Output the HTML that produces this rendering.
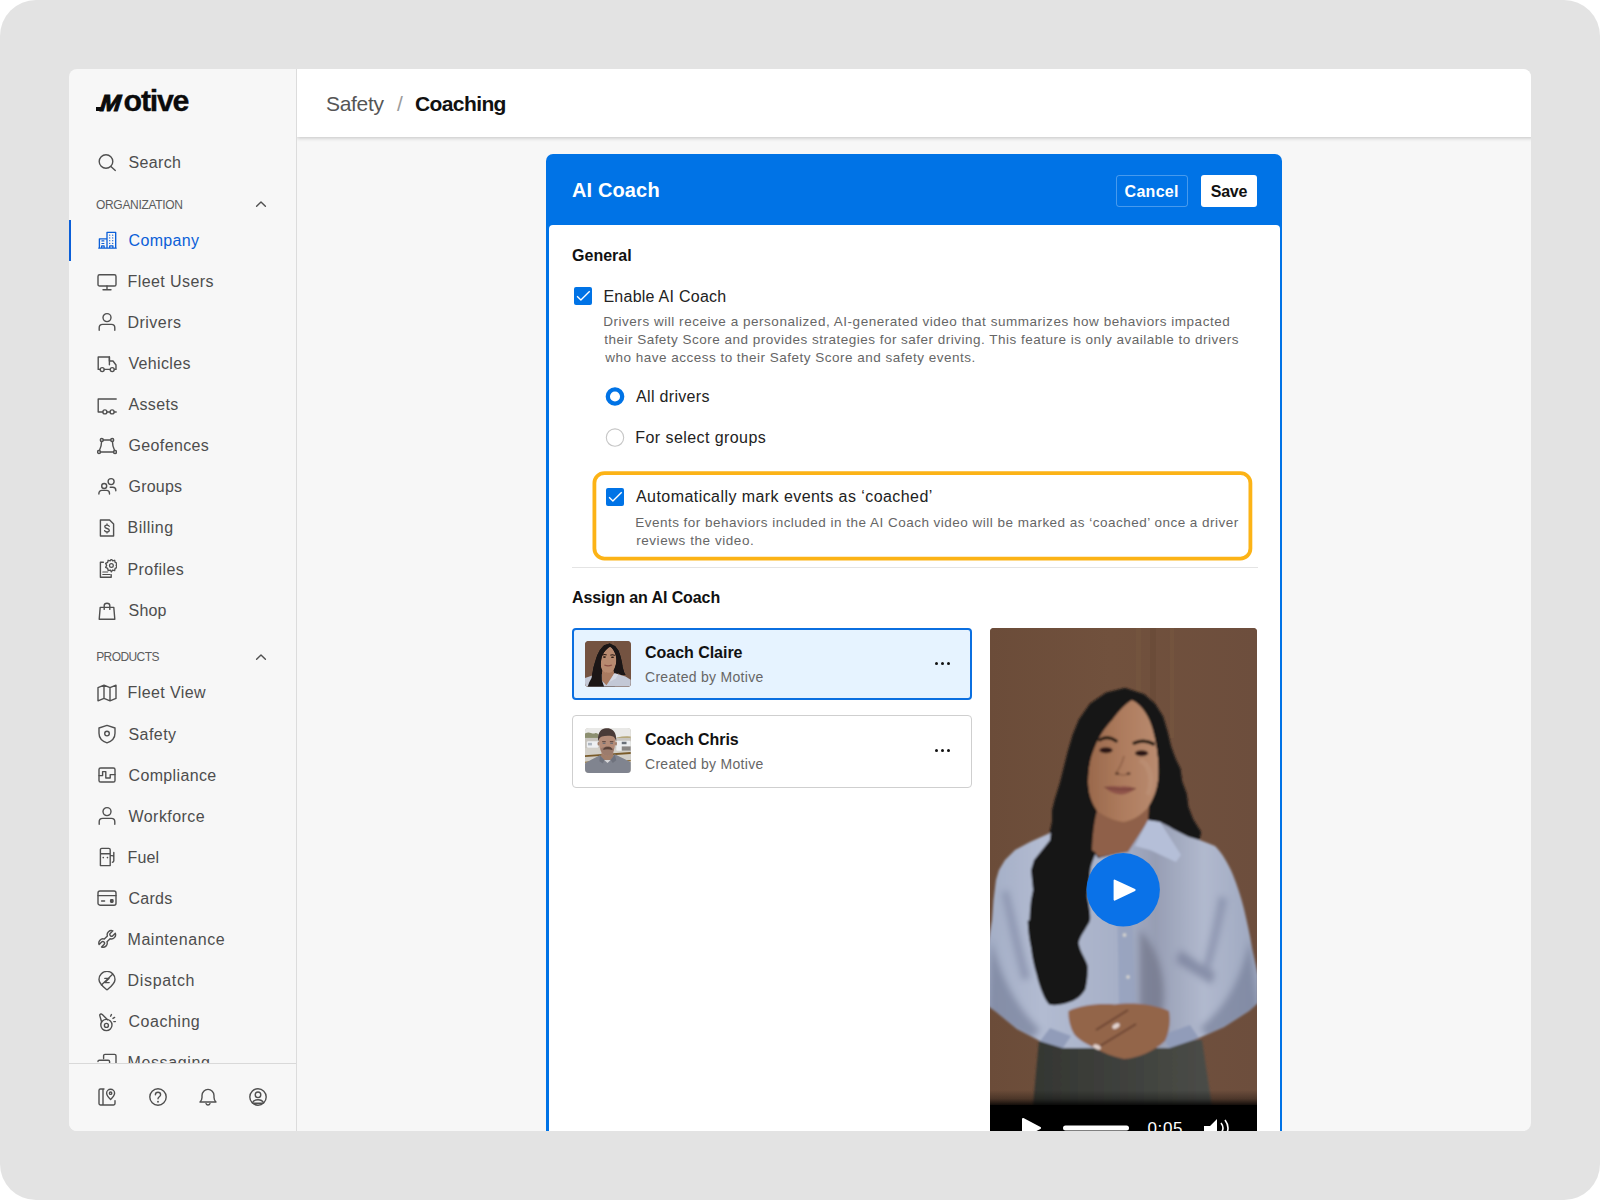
<!DOCTYPE html>
<html lang="en">
<head>
<meta charset="utf-8">
<title>Motive - Safety / Coaching</title>
<style>
*{box-sizing:border-box;margin:0;padding:0}
html,body{width:1600px;height:1200px;overflow:hidden;background:#fff}
body{font-family:"Liberation Sans",sans-serif;color:#222;position:relative}
.frame{position:absolute;left:0;top:0;width:1600px;height:1200px;background:#e3e3e3;border-radius:36px}
.panel{position:absolute;left:68.5px;top:68.5px;width:1462.5px;height:1062.5px;background:#f7f7f7;border-radius:8px;overflow:hidden}
.abs{position:absolute;left:-68.5px;top:-68.5px;width:1600px;height:1200px}
.abs *{position:absolute}
.t{white-space:nowrap}
.sideline{left:296px;top:68px;width:1px;height:1064px;background:#dcdcdc}
.ico{left:97px;width:20px;height:20px;fill:none;stroke:#505050;stroke-width:1.4;stroke-linecap:round;stroke-linejoin:round}
.logoM{left:98.2px;top:90.2px;font-size:23.4px;line-height:26px;height:26px;font-weight:700;color:#0b0b0b;-webkit-text-stroke:1px #0b0b0b;transform:skewX(-17deg) scaleX(1.06);transform-origin:0 21.5px}
.footline{left:68px;top:1063px;width:228px;height:1px;background:#d9d9d9}
.footmask{left:68px;top:1064px;width:228px;height:68px;background:#f7f7f7}
.topbar{left:297px;top:68px;width:1236px;height:69px;background:#fff;box-shadow:0 1px 4px rgba(0,0,0,.22);clip-path:inset(0 0 -12px 0)}
.card{left:546px;top:154px;width:736px;height:1000px;background:#0073e6;border-radius:7px 7px 0 0}
.cardbody{left:548.5px;top:225px;width:731.5px;height:1000px;background:#fff;border-radius:4px 4px 0 0}
.cb{width:18.4px;height:18.4px;background:#0073e6;border-radius:2px}
.cb svg{left:0;top:0;width:18.4px;height:18.4px;fill:none;stroke:#fff;stroke-width:1.35;stroke-linecap:square;stroke-linejoin:round}
.radio{width:18px;height:18px;border-radius:50%;border:1px solid #c4c4c4;background:#fff}
.radio.on{border:5.5px solid #0b6fe0}
.dots{width:15px;height:3px}
.dots i{width:3px;height:3px;border-radius:50%;background:#111;top:0;left:0}

</style>
</head>
<body>
<div class="frame"></div>
<div class="panel"><div class="abs">

<!-- SIDEBAR -->
<div class="sideline"></div>
<div style="left:0;top:0;width:0;height:0"><span class="t logoM">M</span><span class="t" style="left:123.60px;top:81.05px;font-size:30.4px;line-height:38px;height:38px;font-weight:700;color:#0b0b0b;letter-spacing:-1.282px;-webkit-text-stroke:.35px #0b0b0b;">otive</span></div><div style="left:95.9px;top:107px;width:7.5px;height:3.7px;background:#0b0b0b"></div>
<div style="left:68.5px;top:219.5px;width:2.5px;height:41px;background:#0b5fd8"></div>
<div class="t" style="left:128.50px;top:153.35px;font-size:16px;line-height:20px;height:20px;font-weight:400;color:#4d4d4d;letter-spacing:0.341px;">Search</div>
<div class="t" style="left:96.00px;top:197.55px;font-size:12px;line-height:15px;height:15px;font-weight:400;color:#5c5c5c;letter-spacing:-0.316px;">ORGANIZATION</div>
<div class="t" style="left:128.60px;top:231.25px;font-size:16px;line-height:20px;height:20px;font-weight:400;color:#0b5fd8;letter-spacing:0.304px;">Company</div>
<div class="t" style="left:127.50px;top:271.55px;font-size:16px;line-height:20px;height:20px;font-weight:400;color:#4d4d4d;letter-spacing:0.420px;">Fleet Users</div>
<div class="t" style="left:127.50px;top:312.70px;font-size:16px;line-height:20px;height:20px;font-weight:400;color:#4d4d4d;letter-spacing:0.473px;">Drivers</div>
<div class="t" style="left:128.50px;top:353.85px;font-size:16px;line-height:20px;height:20px;font-weight:400;color:#4d4d4d;letter-spacing:0.329px;">Vehicles</div>
<div class="t" style="left:128.50px;top:395.00px;font-size:16px;line-height:20px;height:20px;font-weight:400;color:#4d4d4d;letter-spacing:0.337px;">Assets</div>
<div class="t" style="left:128.50px;top:436.15px;font-size:16px;line-height:20px;height:20px;font-weight:400;color:#4d4d4d;letter-spacing:0.365px;">Geofences</div>
<div class="t" style="left:128.50px;top:477.30px;font-size:16px;line-height:20px;height:20px;font-weight:400;color:#4d4d4d;letter-spacing:0.206px;">Groups</div>
<div class="t" style="left:127.50px;top:518.45px;font-size:16px;line-height:20px;height:20px;font-weight:400;color:#4d4d4d;letter-spacing:0.485px;">Billing</div>
<div class="t" style="left:127.50px;top:559.60px;font-size:16px;line-height:20px;height:20px;font-weight:400;color:#4d4d4d;letter-spacing:0.421px;">Profiles</div>
<div class="t" style="left:128.50px;top:600.75px;font-size:16px;line-height:20px;height:20px;font-weight:400;color:#4d4d4d;letter-spacing:0.210px;">Shop</div>
<div class="t" style="left:96.20px;top:649.95px;font-size:12px;line-height:15px;height:15px;font-weight:400;color:#5c5c5c;letter-spacing:-0.590px;">PRODUCTS</div>
<div class="t" style="left:127.50px;top:683.45px;font-size:16px;line-height:20px;height:20px;font-weight:400;color:#4d4d4d;letter-spacing:0.405px;">Fleet View</div>
<div class="t" style="left:128.50px;top:724.55px;font-size:16px;line-height:20px;height:20px;font-weight:400;color:#4d4d4d;letter-spacing:0.428px;">Safety</div>
<div class="t" style="left:128.50px;top:765.65px;font-size:16px;line-height:20px;height:20px;font-weight:400;color:#4d4d4d;letter-spacing:0.357px;">Compliance</div>
<div class="t" style="left:128.50px;top:806.75px;font-size:16px;line-height:20px;height:20px;font-weight:400;color:#4d4d4d;letter-spacing:0.449px;">Workforce</div>
<div class="t" style="left:127.50px;top:847.85px;font-size:16px;line-height:20px;height:20px;font-weight:400;color:#4d4d4d;letter-spacing:0.143px;">Fuel</div>
<div class="t" style="left:128.50px;top:888.95px;font-size:16px;line-height:20px;height:20px;font-weight:400;color:#4d4d4d;letter-spacing:0.255px;">Cards</div>
<div class="t" style="left:127.50px;top:930.05px;font-size:16px;line-height:20px;height:20px;font-weight:400;color:#4d4d4d;letter-spacing:0.548px;">Maintenance</div>
<div class="t" style="left:127.50px;top:971.15px;font-size:16px;line-height:20px;height:20px;font-weight:400;color:#4d4d4d;letter-spacing:0.678px;">Dispatch</div>
<div class="t" style="left:128.50px;top:1012.25px;font-size:16px;line-height:20px;height:20px;font-weight:400;color:#4d4d4d;letter-spacing:0.514px;">Coaching</div>
<div class="t" style="left:127.50px;top:1053.35px;font-size:16px;line-height:20px;height:20px;font-weight:400;color:#4d4d4d;letter-spacing:0.628px;">Messaging</div>
<svg class="ico" style="top:152.5px" viewBox="0 0 20 20"><circle cx="9" cy="8.500" r="6.800"/><path d="M13.900 13.400L18.300 17.400"/></svg>
<svg class="ico" style="top:229.7px;stroke:#0b5fd8" viewBox="0 0 20 20"><path d="M10 18.100V2.400h8.700v15.700M2.400 18.100V8.800H10M1.700 18.100h17.600M4.700 18.100v-2.300h2.400v2.300M12.700 18.100v-2.300h3.200v2.300" stroke-width="1.350"/><path d="M12.700 5.200h.01M15.700 5.200h.01M12.700 7.900h.01M15.700 7.900h.01M12.700 10.700h.01M15.700 10.700h.01M12.700 13.400h.01M15.700 13.400h.01" stroke-width="1.300"/><path d="M4.900 10.900h2M4.900 13.500h2" stroke-width="1.200"/></svg>
<svg class="ico" style="top:271.5px" viewBox="0 0 20 20"><rect x="1" y="2.8" width="18" height="11.2" rx="1.6"/><path d="M10 14v3.6M6 17.8h8"/></svg>
<svg class="ico" style="top:311.8px" viewBox="0 0 20 20"><circle cx="10" cy="5.6" r="4"/><path d="M2.2 18.2v-2.4c0-2 1.4-3.4 3.4-3.4h8.8c2 0 3.4 1.4 3.4 3.4v2.4"/></svg>
<svg class="ico" style="top:353.8px" viewBox="0 0 20 20"><path d="M3 15.4H1.2V3h11.2v4M12.4 7h3.6l3 4v4.4h-1.4M7.4 15.4h5"/><path d="M12.4 3v7.8" /><circle cx="5.2" cy="15.6" r="2"/><circle cx="15.2" cy="15.6" r="2"/></svg>
<svg class="ico" style="top:394.5px" viewBox="0 0 20 20"><path d="M19.2 4H1.2v13h4.4M10.2 17h2.6M17.4 17h1.8"/><circle cx="7.9" cy="16.9" r="2"/><circle cx="15.1" cy="16.9" r="2"/></svg>
<svg class="ico" style="top:435.7px" viewBox="0 0 20 20"><circle cx="4.8" cy="4" r="1.5"/><circle cx="15.2" cy="4" r="1.5"/><circle cx="2" cy="16" r="1.5"/><circle cx="18" cy="16" r="1.5"/><path d="M6.3 4h7.4M3.5 16h13M4.6 5.5C4.6 9 3.6 12 2.4 14.5M15.4 5.5c0 3.500 1 6.500 2.200 9"/></svg>
<svg class="ico" style="top:477px" viewBox="0 0 20 20"><circle cx="7.2" cy="9" r="2.5"/><circle cx="14.1" cy="4.600" r="3"/><path d="M1.900 17.100v-.7c0-1.800 1.200-3 3-3h4.600c1.800 0 3 1.200 3 3v.7M13.200 10.300h2.600c1.800 0 3 1.200 3 3v.5"/></svg>
<svg class="ico" style="top:518px" viewBox="0 0 20 20"><path d="M3.400 2h9.200l4 4v12H3.400z"/><path d="M12.200 8.300c-.4-.8-1.200-1.200-2.200-1.200-1.300 0-2.200.7-2.200 1.700 0 2.400 4.500 1 4.500 3.400 0 1-1 1.700-2.300 1.700-1.100 0-2-.5-2.400-1.300M10 5.900v1.200M10 13.900v1.200" stroke-width="1.300"/></svg>
<svg class="ico" style="top:559px" viewBox="0 0 20 20"><path d="M6.400 3.300H3.400v14.900h10.800v-2.500"/><path d="M5.800 13h4.800M5.800 15.500h7.400" stroke-width="1.150"/><circle cx="14.400" cy="6.400" r="1.900" stroke-width="1.250"/><path transform="translate(14.4 6.400) scale(1.250) translate(-14.3 -6.800)" d="M14.300 1.600l.9 1.500 1.700-.4.400 1.700 1.600.8-.8 1.600.8 1.600-1.600.8-.4 1.700-1.700-.4-.9 1.500-.9-1.500-1.700.4-.4-1.700-1.600-.8.800-1.600-.8-1.600 1.600-.8.400-1.700 1.700.4z" stroke-width="1.050"/></svg>
<svg class="ico" style="top:600.5px" viewBox="0 0 20 20"><path d="M3.200 6.400h13.600l1 11.800H2.200z"/><path d="M7.200 8.400V4.600c0-1.400 1.200-2.400 2.800-2.400s2.800 1 2.800 2.400v3.800"/></svg>
<svg class="ico" style="left:254px;top:198.500px;width:14px;height:10px" viewBox="0 0 14 10"><path d="M2.600 7.300L7 2.900l4.400 4.400" stroke-width="1.4"/></svg>
<svg class="ico" style="left:254px;top:651.500px;width:14px;height:10px" viewBox="0 0 14 10"><path d="M2.600 7.300L7 2.900l4.400 4.400" stroke-width="1.4"/></svg>
<svg class="ico" style="top:682.5px" viewBox="0 0 20 20"><path d="M1 4.600l6-2.400 6 2.400 6-2.400v13.200l-6 2.400-6-2.400-6 2.400zM7 2.200v13.200M13 4.600v13.200"/></svg>
<svg class="ico" style="top:723.5px" viewBox="0 0 20 20"><path d="M10 1.400l8 2.600v5.200c0 4.600-3.200 8-8 9.600-4.800-1.600-8-5-8-9.600V4z"/><circle cx="10" cy="9.600" r="2.300"/></svg>
<svg class="ico" style="top:765px" viewBox="0 0 20 20"><rect x="2" y="3" width="16" height="14" rx="1.600"/><path d="M2 10.600h3.600V6.600h3.200v6.400h4.400v-3.400H18"/></svg>
<svg class="ico" style="top:805.5px" viewBox="0 0 20 20"><circle cx="10" cy="5.6" r="4"/><path d="M2.2 18.2v-2.4c0-2 1.4-3.4 3.4-3.4h8.8c2 0 3.4 1.4 3.4 3.4v2.4"/></svg>
<svg class="ico" style="top:846.5px" viewBox="0 0 20 20"><path d="M3.400 18.600V2.800c0-.8.600-1.400 1.400-1.400h7c.8 0 1.400.6 1.400 1.400v15.800zM3.400 6.800h9.800M13.200 8.600h2c.9 0 1.600.7 1.600 1.600v3.600c0 .8-.6 1.400-1.400 1.400M16.800 10V5.400"/><path d="M6.200 10.600h.1M10.400 10.600h.1" stroke-width="1.600"/></svg>
<svg class="ico" style="top:888px" viewBox="0 0 20 20"><rect x="1" y="3" width="18" height="14.200" rx="2"/><path d="M1 7.600h18M4.600 13h3"/><rect x="13.600" y="11.800" width="2.400" height="2.400" rx=".6" fill="#4f4f4f"/></svg>
<svg class="ico" style="top:929.3px" viewBox="0 0 20 20"><path transform="translate(10.2 9.9) rotate(-45)" d="M-2.15 -1.9L2.15 -1.9A4.2 4.2 0 0 1 9.74 -1.7L6.2 -1.7A1.7 1.7 0 0 0 6.2 1.7L9.74 1.7A4.2 4.2 0 0 1 2.15 1.9L-2.15 1.9A4.2 4.2 0 0 1 -9.74 1.7L-6.2 1.7A1.7 1.7 0 0 0 -6.2 -1.7L-9.74 -1.7A4.2 4.2 0 0 1 -2.15 -1.9Z"/></svg>
<svg class="ico" style="top:970.5px" viewBox="0 0 20 20"><path d="M10 18.800c-4-3.400-8-6.200-8-10.400a8 8 0 0116 0c0 4.200-4 7-8 10.400z"/><path d="M4.400 14L15.600 3.200M7.800 7.400h4.400l-4.200 4.200h4.200" stroke-width="1.300"/></svg>
<svg class="ico" style="top:1012px" viewBox="0 0 20 20"><circle cx="9.400" cy="13" r="5.600"/><circle cx="9.400" cy="13.400" r="2"/><path d="M4.600 10L2.800 3.600c-.2-.8.200-1.400 1-1.600.6-.1 1.100.1 1.500.6l5.300 5.200M13.600 4.200l.8-1.600M16 6.400l1.600-1M16.800 9.600h1.600"/></svg>
<svg class="ico" style="top:1052.5px" viewBox="0 0 20 20"><path d="M6.600 5.600V2.800c0-.8.600-1.400 1.400-1.400h9.600c.8 0 1.400.6 1.400 1.400v9M1 8.600c0-.8.600-1.400 1.400-1.400h8.800c.8 0 1.400.6 1.400 1.400v8"/></svg>


<div class="footmask"></div>
<div class="footline"></div>

<svg class="ico" style="left:97.3px;top:1087px" viewBox="0 0 20 20"><path d="M7 2H3.400C2.600 2 2 2.600 2 3.400v13.200c0 .8.600 1.400 1.400 1.400h13.200c.8 0 1.400-.6 1.400-1.400v-3M6 2v16"/><path d="M13.600 12.400c-2.200-2.200-4-4-4-6.200a4 4 0 018 0c0 2.200-1.800 4-4 6.200z"/><circle cx="13.600" cy="6.200" r="1.200"/></svg>
<svg class="ico" style="left:147.6px;top:1087px" viewBox="0 0 20 20"><circle cx="10" cy="10" r="8.200"/><path d="M7.400 7.800c0-1.500 1.100-2.500 2.600-2.500s2.600 1 2.600 2.400c0 2-2.600 2-2.600 4.100"/><path d="M10 14.600v.2" stroke-width="1.800"/></svg>
<svg class="ico" style="left:198px;top:1087px" viewBox="0 0 20 20"><path d="M2 15h16c-1.400-1.200-2-2.600-2-4.400V8.400a6 6 0 00-12 0v2.200c0 1.800-.6 3.200-2 4.400zM8 16.600c.4 1 1.100 1.400 2 1.400s1.600-.4 2-1.400"/></svg>
<svg class="ico" style="left:248.39999999999998px;top:1087px" viewBox="0 0 20 20"><circle cx="10" cy="10" r="8.200"/><circle cx="10" cy="7.800" r="2.800"/><path d="M4.400 15.800c1-2 3-3 5.600-3s4.600 1 5.600 3" /><path d="M5.400 16.200h9.200"/></svg>




<!-- TOP BAR -->
<div class="topbar"></div>

<!-- CARD -->
<div class="card"></div>
<div class="cardbody"></div>
<div style="left:1115.5px;top:175px;width:72px;height:32px;border:1px solid rgba(255,255,255,.28);border-radius:3px"></div>
<div style="left:1201px;top:175px;width:56px;height:32px;background:#fff;border-radius:3px"></div>

<div class="cb" style="left:573.7px;top:286.8px"><svg viewBox="0 0 18 18"><path d="M3.5 9.6L6.75 12.7L14.9 4.6"/></svg></div>
<svg style="left:600px;top:380px;width:30px;height:75px" viewBox="600 380 30 75"><circle cx="615" cy="396.5" r="7.2" fill="#fff" stroke="#0073e6" stroke-width="4.3"/><circle cx="615" cy="437.6" r="8.7" fill="#fff" stroke="#c6c6c6" stroke-width="1.1"/></svg>

<svg style="left:588px;top:466px;width:670px;height:100px" viewBox="588 466 670 100"><rect x="594.400" y="473.100" width="656" height="85.500" rx="10" ry="10" fill="none" stroke="#fcb316" stroke-width="3.800"/></svg>
<div class="cb" style="left:605.7px;top:487.8px"><svg viewBox="0 0 18 18"><path d="M3.5 9.6L6.75 12.7L14.9 4.6"/></svg></div>

<div style="left:571.5px;top:567px;width:686px;height:1px;background:#e4e4e4"></div>

<div style="left:571.5px;top:628px;width:400px;height:72px;background:#e6f3ff;border:2px solid #0b6fe0;border-radius:4px"></div>
<div class="dots" style="left:934.5px;top:662px"><i></i><i style="left:6px"></i><i style="left:12px"></i></div>
<div style="left:571.5px;top:714.5px;width:400px;height:73px;background:#fff;border:1px solid #cfcfcf;border-radius:4px"></div>
<div class="dots" style="left:934.5px;top:749px"><i></i><i style="left:6px"></i><i style="left:12px"></i></div>
<div class="t" style="left:326.00px;top:90.65px;font-size:21px;line-height:26px;height:26px;font-weight:400;color:#555;letter-spacing:-0.327px;">Safety</div>
<div class="t" style="left:396.90px;top:90.65px;font-size:21px;line-height:26px;height:26px;font-weight:400;color:#9b9b9b;letter-spacing:0.000px;">/</div>
<div class="t" style="left:415.00px;top:90.65px;font-size:21px;line-height:26px;height:26px;font-weight:700;color:#111;letter-spacing:-0.606px;">Coaching</div>
<div class="t" style="left:571.90px;top:177.85px;font-size:20px;line-height:25px;height:25px;font-weight:700;color:#fff;letter-spacing:0.148px;">AI Coach</div>
<div class="t" style="left:1124.60px;top:181.95px;font-size:16px;line-height:20px;height:20px;font-weight:700;color:#fff;letter-spacing:0.275px;">Cancel</div>
<div class="t" style="left:1210.80px;top:181.95px;font-size:16px;line-height:20px;height:20px;font-weight:700;color:#111;letter-spacing:-0.256px;">Save</div>
<div class="t" style="left:572.10px;top:245.65px;font-size:16px;line-height:20px;height:20px;font-weight:700;color:#111;letter-spacing:0.002px;">General</div>
<div class="t" style="left:603.40px;top:286.55px;font-size:16px;line-height:20px;height:20px;font-weight:400;color:#222;letter-spacing:0.262px;">Enable AI Coach</div>
<div class="t" style="left:603.20px;top:313.15px;font-size:13.5px;line-height:17px;height:17px;font-weight:400;color:#666;letter-spacing:0.533px;">Drivers will receive a personalized, AI-generated video that summarizes how behaviors impacted</div>
<div class="t" style="left:604.20px;top:331.15px;font-size:13.5px;line-height:17px;height:17px;font-weight:400;color:#666;letter-spacing:0.490px;">their Safety Score and provides strategies for safer driving. This feature is only available to drivers</div>
<div class="t" style="left:605.20px;top:349.15px;font-size:13.5px;line-height:17px;height:17px;font-weight:400;color:#666;letter-spacing:0.493px;">who have access to their Safety Score and safety events.</div>
<div class="t" style="left:636.00px;top:386.95px;font-size:16px;line-height:20px;height:20px;font-weight:400;color:#222;letter-spacing:0.327px;">All drivers</div>
<div class="t" style="left:635.30px;top:428.15px;font-size:16px;line-height:20px;height:20px;font-weight:400;color:#222;letter-spacing:0.428px;">For select groups</div>
<div class="t" style="left:636.00px;top:487.45px;font-size:16px;line-height:20px;height:20px;font-weight:400;color:#222;letter-spacing:0.437px;">Automatically mark events as ‘coached’</div>
<div class="t" style="left:635.20px;top:514.45px;font-size:13.5px;line-height:17px;height:17px;font-weight:400;color:#666;letter-spacing:0.484px;">Events for behaviors included in the AI Coach video will be marked as ‘coached’ once a driver</div>
<div class="t" style="left:636.20px;top:532.45px;font-size:13.5px;line-height:17px;height:17px;font-weight:400;color:#666;letter-spacing:0.559px;">reviews the video.</div>
<div class="t" style="left:572.00px;top:587.95px;font-size:16px;line-height:20px;height:20px;font-weight:700;color:#111;letter-spacing:-0.087px;">Assign an AI Coach</div>
<div class="t" style="left:645.00px;top:642.95px;font-size:16px;line-height:20px;height:20px;font-weight:700;color:#111;letter-spacing:-0.029px;">Coach Claire</div>
<div class="t" style="left:645.00px;top:668.45px;font-size:14px;line-height:18px;height:18px;font-weight:400;color:#666;letter-spacing:0.292px;">Created by Motive</div>
<div class="t" style="left:645.00px;top:729.75px;font-size:16px;line-height:20px;height:20px;font-weight:700;color:#111;letter-spacing:-0.054px;">Coach Chris</div>
<div class="t" style="left:645.00px;top:755.45px;font-size:14px;line-height:18px;height:18px;font-weight:400;color:#666;letter-spacing:0.292px;">Created by Motive</div>

<div style="left:585.2px;top:641.1px;width:45.7px;height:45.5px;border-radius:4px;overflow:hidden;background:#735240">
<svg style="left:0;top:0;width:45.7px;height:45.5px" viewBox="0 0 46 46" preserveAspectRatio="none">
<defs><filter id="ab" x="-10%" y="-10%" width="120%" height="120%"><feGaussianBlur stdDeviation="0.55"/></filter></defs>
<rect width="46" height="46" fill="#745341"/>
<rect x="27.5" y="0" width="1.5" height="8" fill="#7e5c48"/>
<g filter="url(#ab)">
<path d="M24.900 2.600L19.200 4.200L15 9L12.200 14.600L10.300 20.700L8.500 26.900L7.500 32.500L6.600 37.300L4.200 42L2.800 46H30L33 32L37.100 34.400L40.800 34.400L39.400 31.600L38 26.900L37.100 21.200L35.700 15.100L33.800 9.900L30.500 5.200Z" fill="#1a1516"/>
<path d="M0 46V37.300L7.500 34.900L20 33L29.600 32.500L40.800 35.800L46 39.200V46Z" fill="#c3c8d6"/>
<path d="M16.900 29L30 29L29.600 32.500L21.600 44.800L16.900 40Z" fill="#a97a60"/>
<path d="M29.600 32.500L33.500 33.700L31 38L24.500 41.500Z" fill="#d4d8e3"/>
<path d="M25.400 5.700C28 7 29.600 10.400 30.500 13C31.500 16 31.800 19 31.500 21.200C31.300 23 31 24.500 30.500 25.900C30 27.500 29.400 28.800 28.700 29.700C27 31.500 25 32.200 23 32C21.500 31.900 20.600 31.800 20.200 31.600C19 31 18 30.500 17.400 29.700C16.600 28.500 16.100 27.200 16 25.900C15.800 24.300 15.800 22.800 16 21.200C16.200 19.500 16.500 17.600 16.900 16C17.500 14.300 18.300 12.700 19.200 11.300C20.800 9 23 7 25.400 5.700Z" fill="#b88a6f"/>
<path d="M25.800 4.800C23 6.500 20.800 9 19.200 11.300C18.300 12.700 17.500 14.300 16.900 16C16.500 17.600 16.200 19.500 16 21.200C15.800 22.800 15.800 24.300 16 25.900C16.100 27.200 16.600 28.500 17.400 29.700L16.900 33L17 40L19.200 46H2.800L4.200 42L6.600 37.300L7.500 32.500L8.500 26.900L10.300 20.700L12.200 14.600L15 9L19.200 4.200L24.900 2.600Z" fill="#1a1516"/>
<path d="M24.900 2.600L30.500 5.200L33.800 9.900L35.700 15.100L37.100 21.200L38 26.900L39.400 31.600L40.800 34.400L37.100 34.400L32.400 32L29.600 32.500L28.700 29.700C29.400 28.800 30 27.500 30.500 25.900C31 24.500 31.300 23 31.500 21.200C31.800 19 31.500 16 30.500 13C29.600 10.400 28 7 25.400 5.700Z" fill="#1a1516"/>
<path d="M17.500 14.300q2-1.200 4.300-.2M25.500 14.300q2.300-.9 4.500.3" stroke="#2a1b14" stroke-width="1.100" fill="none"/>
<ellipse cx="19.600" cy="16.300" rx="1.600" ry=".8" fill="#2a1b14"/><ellipse cx="27.700" cy="16.500" rx="1.600" ry=".8" fill="#2a1b14"/>
<path d="M19.500 24.300q3.700 1.800 7.600 0" stroke="#8a5045" stroke-width="1.300" fill="none"/>
</g>
</svg></div>
<div style="left:585.2px;top:727.9px;width:45.7px;height:45.5px;border-radius:4px;overflow:hidden;background:#c9c6c0">
<svg style="left:0;top:0;width:45.7px;height:45.5px" viewBox="0 0 46 46" preserveAspectRatio="none">
<rect width="46" height="46" fill="#d2cfc8"/>
<rect width="46" height="10.500" fill="#e9e9e7"/>
<g filter="url(#ab)">
<path d="M0 5.500q3-1.500 6-.5t4 .2 3.600 1V10H0z" fill="#8c8f6f"/>
<path d="M32 9.500q7-1.500 14-1V11.500H32z" fill="#b3a474"/>
<rect x="0" y="10" width="46" height="10.500" fill="#c8c5bf"/>
<rect x="1.900" y="13.400" width="11.700" height="6.600" rx="1.200" fill="#eef0f2"/>
<rect x="3" y="15" width="4" height="2.600" fill="#aeb6c0"/>
<rect x="31.500" y="13" width="14.500" height="9.900" rx="1.200" fill="#eceeef"/>
<rect x="37" y="13.900" width="4.800" height="2.500" fill="#6a7078"/>
<rect x="37" y="18.600" width="9" height="4.300" fill="#8a8784"/>
<rect x="0" y="20.500" width="14" height="7" fill="#d3d0c9"/>
<path d="M0 27.600L46 24.200V26.200L0 29.200Z" fill="#7a5c2c"/>
<path d="M0 34L5 33.700V34.800L0 35.100ZM42 32.700L46 32.400V33.500L42 33.800Z" fill="#8a6a34"/>
<path d="M0 46V36C4 33 9 30.500 15 27.500L23 31L30 26.500C36 29.500 42 32 46 34.700V46Z" fill="#80848f"/>
<path d="M17 24H28.500V29L25.500 32.300H19.500L16 28.500Z" fill="#a17e6b"/>
<path d="M19.200 32.300H25.800L22.700 35.400Z" fill="#d6d6d8"/>
<path d="M15 28L19.500 32.300L18 36L14.500 33.500ZM30 27L25.800 32.300L28 35.500L31.500 32.500Z" fill="#6e727d"/>
<path d="M22 2.500C27.500 2.500 30.300 6 30.400 11C30.500 14.500 30.200 18.500 29.200 22C28 26 25.500 28.300 22.500 28.300C19.400 28.300 16.800 26 15.500 22C14.500 18.500 14 14.500 14.200 11C14.400 6 16.800 2.500 22 2.500Z" fill="#b48c78"/>
<path d="M15.500 21C17 19.500 19 19.200 22.800 19.200C26.500 19.200 28 19.800 29.400 21C28.800 25 26 28.300 22.500 28.300C19 28.300 16.500 25 15.500 21Z" fill="#94766a" opacity=".75"/>
<path d="M13.300 13.500C12.500 8 14 3 17.500 1.200C19.500 .2 21 0 22.200 .3C26 .2 30 2.500 31 7.500C31.500 10 31.600 12 31.300 13.500C30.600 10.500 29.500 8.800 27.500 8.300C24 7.500 20 7.700 17 8.600C15 9.300 14 11 13.300 13.500Z" fill="#4a3b37"/>
<ellipse cx="13.600" cy="15.800" rx="1" ry="2" fill="#a17e6b"/><ellipse cx="31.200" cy="15.800" rx="1" ry="2" fill="#a17e6b"/>
<path d="M18.600 21.600C19.500 19.600 21.500 19 23 19.300C24.800 19 26.600 19.800 27.400 21.800C26 21.300 24.500 21 23 21.200C21.500 21 20 21.200 18.600 21.600Z" fill="#5a4238" stroke="#5a4238" stroke-width=".8"/>
<path d="M17.300 13.800h3.600M25 13.800h3.600" stroke="#5c463c" stroke-width="1"/>
<path d="M17.800 15.400h2.800M25.400 15.400h2.800" stroke="#4f5e6e" stroke-width=".9"/>
</g>
</svg></div>

<div style="left:990px;top:628px;width:267px;height:510px;border-radius:4px 4px 0 0;overflow:hidden;background:#6e4e3b">
<svg style="left:0;top:0;width:267px;height:510px" viewBox="990 628 267 510">
<defs>
<linearGradient id="bgG" x1="0" x2="1" y1="0" y2="0"><stop offset="0" stop-color="#6b4c39"/><stop offset=".45" stop-color="#71513d"/><stop offset="1" stop-color="#6d4e3d"/></linearGradient>
<linearGradient id="shade" x1="0" x2="0" y1="0" y2="1"><stop offset="0" stop-color="#000" stop-opacity="0"/><stop offset=".55" stop-color="#000" stop-opacity=".3"/><stop offset="1" stop-color="#000" stop-opacity=".9"/></linearGradient>
<linearGradient id="faceG" x1="0" x2="1" y1="0" y2="0"><stop offset="0" stop-color="#9a694c"/><stop offset=".5" stop-color="#ae7c5e"/><stop offset="1" stop-color="#b98b70"/></linearGradient>
<linearGradient id="shirtG" x1="0" x2="1" y1="0" y2="0"><stop offset="0" stop-color="#a4aec6"/><stop offset=".2" stop-color="#b2bbd1"/><stop offset=".48" stop-color="#a7b0c7"/><stop offset=".62" stop-color="#979eb4"/><stop offset=".8" stop-color="#b1b9ce"/><stop offset="1" stop-color="#9da7bf"/></linearGradient>
<linearGradient id="skirtG" x1="0" x2="1" y1="0" y2="0"><stop offset="0" stop-color="#343632"/><stop offset=".55" stop-color="#40423e"/><stop offset="1" stop-color="#4b4d48"/></linearGradient>
<filter id="b1" x="-10%" y="-10%" width="120%" height="120%"><feGaussianBlur stdDeviation="0.8"/></filter>
<filter id="b2" x="-20%" y="-20%" width="140%" height="140%"><feGaussianBlur stdDeviation="3"/></filter>
<clipPath id="shirtC"><path d="M1050 833 L1030 842 L1015 850 L1005 860 L999 870 L996 880 L993.5 900 L992 920 L990 932 L988 946 L988 1006 L995 1011 L1017 1029 L1040 1041 L1063 1048 L1169 1048 L1199 1038 L1224 1027 L1249 1011 L1258 1003 L1258 975 C1256 966 1254 957 1252 948 C1250 935 1247 922 1244 909 C1241 897 1237 885 1233 875 C1228 863 1222 853 1215 846 C1206 842 1196 839 1186 835 L1160 822 L1148 821 L1125 852 L1098 858 L1085 838 Z"/></clipPath>
</defs>
<rect x="990" y="628" width="267" height="510" fill="url(#bgG)"/>
<!-- wall panel lines -->
<rect x="1136" y="628" width="5" height="120" fill="#77573f" opacity=".55"/>
<rect x="1150" y="628" width="6" height="80" fill="#66473580"/>
<rect x="1170" y="628" width="4" height="110" fill="#77573f" opacity=".5"/>
<g filter="url(#b1)">
<!-- hair back mass -->
<path d="M1125 688 L1106 692.700 L1090 703.700 L1079 719.600 L1072.700 735 L1068 751 L1064 767 L1060 783 L1055 799 L1052 811 L1052 822 L1049 835 L1060 870 L1170 850 L1172.500 828.800 L1188.300 836.700 L1199.400 840 L1201 832 L1193 819.300 L1188.300 806.700 L1186.700 794 L1182 781.300 L1180.400 768.700 L1175.700 759.200 L1171 746.500 L1167.700 732.200 L1163 716.400 L1155 703.700 L1144 694.200 Z" fill="#181615"/>
<!-- skirt -->
<path d="M1039 1040 L1202 1040 L1211.300 1102 L1213 1140 L1031 1140 L1033.300 1102 Z" fill="url(#skirtG)"/>
<!-- shirt -->
<path d="M1050 833 L1030 842 L1015 850 L1005 860 L999 870 L996 880 L993.5 900 L992 920 L990 932 L988 946 L988 1006 L995 1011 L1017 1029 L1040 1041 L1063 1048 L1169 1048 L1199 1038 L1224 1027 L1249 1011 L1258 1003 L1258 975 C1256 966 1254 957 1252 948 C1250 935 1247 922 1244 909 C1241 897 1237 885 1233 875 C1228 863 1222 853 1215 846 C1206 842 1196 839 1186 835 L1160 822 L1148 821 L1125 852 L1098 858 L1085 838 Z" fill="url(#shirtG)"/>
<!-- placket -->
<path d="M1117 900 L1132 900 L1135 1006 L1119 1006 Z" fill="#98a3bf" opacity=".9"/>
<circle cx="1124.500" cy="935" r="1.800" fill="#d8d6d0"/><circle cx="1128" cy="977" r="1.800" fill="#d8d6d0"/>
<!-- soft shirt shadows -->
<g clip-path="url(#shirtC)"><g filter="url(#b2)" opacity=".6">
<path d="M991 940 C1000 970 1010 1000 1040 1030 L1030 1040 L988 1015 Z" fill="#6f7893"/>
<path d="M1250 940 C1240 980 1228 1005 1200 1028 L1210 1040 L1258 1010 Z" fill="#6f7893"/>
<path d="M1140 930 C1160 950 1170 990 1160 1020 L1140 1020 Z" fill="#6b6d80"/>
<path d="M1008 890 C1016 920 1022 950 1030 978 L1022 980 C1014 950 1008 920 1002 893 Z" fill="#7c84a0"/>
<path d="M1219 896 C1214 925 1208 950 1200 976 L1208 978 C1216 950 1222 924 1227 899 Z" fill="#7c84a0"/>
<path d="M1180 950 C1195 960 1205 968 1215 972 L1212 984 C1200 978 1190 970 1176 962 Z" fill="#6d7591"/>
</g></g>
<!-- neck -->
<path d="M1097 806 L1149 806 L1148 821 L1128 852 L1099 857 L1092 850 L1092 830 Z" fill="#8f6148"/>
<!-- collar -->
<path d="M1148 820 L1160 822 L1181 855 L1176 862 L1150 850 L1135 846 Z" fill="#b5bfd8"/>
<!-- face -->
<path d="M1132 700 C1142 704 1150 718 1153 730 C1157 745 1159 760 1158.500 775 C1158 788 1154 798 1149 806 C1143 814 1134 820 1124 822 C1114 821 1104 816 1097 811 C1091 803 1088 792 1088 782 C1088 770 1090 758 1093.500 750 C1097 740 1104 728 1112 720 C1118 712 1125 704 1132 700 Z" fill="url(#faceG)"/>
<!-- front hair: long strand on left -->
<path d="M1134 696 C1126 702 1118 712 1112 720 C1104 728 1097 740 1093.500 750 C1090 758 1088 770 1088 782 C1088 792 1091 803 1097 811 C1094 822 1092.500 836 1092 850 L1096 853 C1092 862 1090 868 1090 875 C1089 884 1087 892 1087.700 898 C1089 906 1091 914 1090 921 C1086 929 1080 936 1078.700 943 C1080 952 1086 959 1087.700 966 C1088 975 1087 982 1085.500 989 C1082 996 1075 1001 1067 1003 C1060 1005 1054 1006 1049 1004.500 C1046 1001 1044 997 1042.400 993 C1040 987 1038 981 1036.700 975 C1034 966 1032 957 1031 948 C1029 939 1028 930 1027.700 921 L1029.500 920 L1030 910 L1031 900 L1033 890 L1032 880 L1031 870 L1034 860 L1042 850 L1050 840 L1051 830 L1052 822 L1052 811 L1055 799 L1060 783 L1064 767 L1068 751 L1072.700 735 L1079 719.600 L1090 703.700 L1106 692.700 L1125 688 Z" fill="#181615"/>
<!-- right hair over shoulder -->
<path d="M1125 688 L1144 694.200 L1155 703.700 L1163 716.400 L1167.700 732.200 L1171 746.500 L1175.700 759.200 L1180.400 768.700 L1182 781.300 L1186.700 794 L1188.300 806.700 L1193 819.300 L1201 832 L1199.400 840 L1188.300 836.700 L1172.500 828.800 L1159.800 819.300 L1152 817.700 L1148.700 806.700 C1154 798 1158 788 1158.500 775 C1159 760 1157 745 1153 730 C1150 718 1142 704 1132 700 Z" fill="#181615"/>
<!-- facial features -->
<path d="M1099.700 740 q8 -5 16.500 1" stroke="#1f140f" stroke-width="3.200" fill="none" stroke-linecap="round"/>
<path d="M1134 743.200 q10 -4.400 19.500 .8" stroke="#1f140f" stroke-width="3.200" fill="none" stroke-linecap="round"/>
<ellipse cx="1106" cy="750.200" rx="6.500" ry="3" fill="#2a1912"/>
<ellipse cx="1141.600" cy="753.200" rx="6.500" ry="3" fill="#2a1912"/>
<path d="M1124 756 C1122 764 1119 769 1116.500 772.500 C1119 775.500 1126 776 1129.500 773" stroke="#8a5c44" stroke-width="1.600" fill="none" opacity=".8"/>
<ellipse cx="1117" cy="773.600" rx="2" ry="1.200" fill="#4a2c1f"/><ellipse cx="1128.500" cy="773.600" rx="2" ry="1.200" fill="#4a2c1f"/>
<path d="M1104.500 787 Q1112 785.500 1120 786.500 Q1128 785.500 1136 788.500 Q1128 794.500 1120 794.500 Q1111 794 1104.500 787Z" fill="#8e5349"/>
<path d="M1104.500 787.300 Q1120 791 1136 788.500" stroke="#6d3c34" stroke-width="1" fill="none"/>
<path d="M1140 760 C1150 765 1154 780 1148 795" stroke="#c39a80" stroke-width="5" fill="none" opacity=".35"/>
<!-- cuffs -->
<path d="M1040 1041 L1063 1048 L1071 1036 L1050 1028 Z" fill="#919cb9"/>
<path d="M1199 1038 L1169 1048 L1162 1035 L1190 1025 Z" fill="#919cb9"/>
<!-- hands -->
<path d="M1068.500 1011 C1080 1005 1100 1003 1115 1004.500 C1130 1002 1155 1004 1169 1011 C1171 1022 1169 1033 1165 1041 C1153 1052 1138 1058 1124 1059 C1113 1057 1103 1053 1094.500 1047.600 C1086 1044 1079 1040 1074 1034 C1070 1027 1068 1019 1068.500 1011 Z" fill="#93654a"/>
<path d="M1096 1030 L1128 1010 M1100 1046 L1136 1024" stroke="#6a4330" stroke-width="1.800"/>
<ellipse cx="1116" cy="1026" rx="4" ry="2.400" fill="#e3d3cf" transform="rotate(-30 1116 1026)"/>
<ellipse cx="1097" cy="1047" rx="4" ry="2.200" fill="#e3d3cf" transform="rotate(25 1097 1047)"/>
</g>
<!-- bottom shade -->
<rect x="990" y="1090" width="267" height="16" fill="url(#shade)"/>
<rect x="990" y="1105" width="267" height="40" fill="#000"/>
<!-- play button -->
<circle cx="1123.200" cy="889.800" r="36.700" fill="#0a72e8"/>
<path d="M1114.600 880.600 L1134.600 890 L1114.600 899.600 Z" fill="#fff" stroke="#fff" stroke-width="2" stroke-linejoin="round"/>
<!-- controls -->
<path d="M1023 1119 L1040 1128 L1023 1137 Z" fill="#fff" stroke="#fff" stroke-width="2" stroke-linejoin="round"/>
<rect x="1063" y="1125.500" width="66" height="5" rx="2.500" fill="#fff"/>
<path d="M1204 1126 L1210 1126 L1217 1119 L1217 1137 L1210 1132 L1204 1132 Z" fill="#fff"/>
<path d="M1221 1123 q4 5 0 10 M1225 1120 q6 8 0 16" stroke="#fff" stroke-width="1.600" fill="none"/>
</svg>
</div>
<div class="t" style="left:1147.40px;top:1118.05px;font-size:17px;line-height:21px;height:21px;font-weight:400;color:#fff;letter-spacing:0.656px;">0:05</div>


</div></div>
</body>
</html>
